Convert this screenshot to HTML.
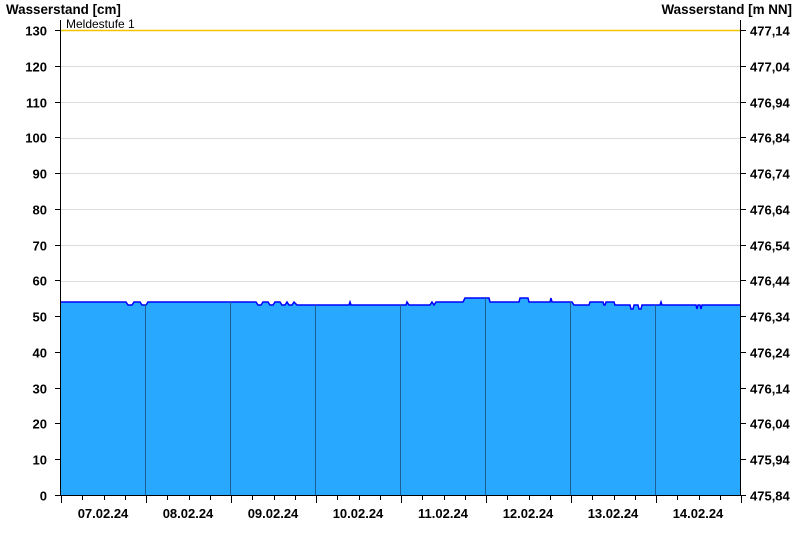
<!DOCTYPE html>
<html><head><meta charset="utf-8"><style>
body{margin:0;background:#fff;width:800px;height:550px;overflow:hidden}
text{font-family:"Liberation Sans",Arial,sans-serif;font-size:13px;font-weight:bold;fill:#000}
</style></head><body>
<svg width="800" height="550" xmlns="http://www.w3.org/2000/svg">
<text x="6" y="14" style="font-size:13.4px">Wasserstand [cm]</text>
<text x="792" y="14" text-anchor="end" style="font-size:13.4px">Wasserstand [m NN]</text>
<g stroke="#dcdcdc" stroke-width="1">
<line x1="61" x2="740" y1="66.5" y2="66.5"/><line x1="61" x2="740" y1="102.5" y2="102.5"/>
<line x1="61" x2="740" y1="138.5" y2="138.5"/><line x1="61" x2="740" y1="173.5" y2="173.5"/>
<line x1="61" x2="740" y1="209.5" y2="209.5"/><line x1="61" x2="740" y1="245.5" y2="245.5"/>
<line x1="61" x2="740" y1="281.5" y2="281.5"/><line x1="61" x2="740" y1="316.5" y2="316.5"/>
</g>
<line x1="61" x2="740" y1="30.5" y2="30.5" stroke="#f5c400" stroke-width="1.5"/>
<text x="66" y="28" style="font-weight:normal;font-size:12px">Meldestufe 1</text>
<polygon fill="#29a8ff" stroke="none" points="61,495 61,302 126,302 128,305 132,305 134,302 140,302 142,305 146,305 148,302 256,302 258,305 261,305 263,302 268,302 270,305 273,305 275,302 280,302 282,305 285,305 287,302 289,305 292,305 294,302 297,305 349,305 350,302 351,305 406,305 407,302 409,305 430,305 432,302 434,305 436,302 463,302 465,298 489,298 490,302 519,302 520,298 528,298 529,302 550,302 551,298 552,302 572,302 574,305 589,305 590,302 603,302 604,305 605,305 606,302 614,302 615,305 630,305 631,309 633,309 634,305 638,305 639,309 641,309 642,305 660,305 661,302 662,305 696,305 697,309 698,305 700,305 701,309 702,305 740,305 740,495"/>
<polyline fill="none" stroke="#0000ff" stroke-width="1.5" points="61,302 126,302 128,305 132,305 134,302 140,302 142,305 146,305 148,302 256,302 258,305 261,305 263,302 268,302 270,305 273,305 275,302 280,302 282,305 285,305 287,302 289,305 292,305 294,302 297,305 349,305 350,302 351,305 406,305 407,302 409,305 430,305 432,302 434,305 436,302 463,302 465,298 489,298 490,302 519,302 520,298 528,298 529,302 550,302 551,298 552,302 572,302 574,305 589,305 590,302 603,302 604,305 605,305 606,302 614,302 615,305 630,305 631,309 633,309 634,305 638,305 639,309 641,309 642,305 660,305 661,302 662,305 696,305 697,309 698,305 700,305 701,309 702,305 740,305"/>
<g stroke="#1d5f96" stroke-width="1">
<line x1="145.5" x2="145.5" y1="304" y2="495"/><line x1="230.5" x2="230.5" y1="302" y2="495"/>
<line x1="315.5" x2="315.5" y1="305" y2="495"/><line x1="400.5" x2="400.5" y1="305" y2="495"/>
<line x1="485.5" x2="485.5" y1="298" y2="495"/><line x1="570.5" x2="570.5" y1="302" y2="495"/>
<line x1="655.5" x2="655.5" y1="305" y2="495"/>
</g>
<g stroke="#000" stroke-width="1">
<line x1="60.5" x2="60.5" y1="20" y2="496"/><line x1="740.5" x2="740.5" y1="20" y2="496"/>
<line x1="60" x2="741" y1="495.5" y2="495.5"/>
</g>
<g stroke="#000" stroke-width="1" id="ticks"></g>
<g id="lab"></g>
<script>
var t=document.getElementById('ticks'),l=document.getElementById('lab'),ns='http://www.w3.org/2000/svg';
function ln(a,b,c,d){var e=document.createElementNS(ns,'line');e.setAttribute('x1',a);e.setAttribute('x2',b);e.setAttribute('y1',c);e.setAttribute('y2',d);t.appendChild(e);}
function tx(x,y,s,a){var e=document.createElementNS(ns,'text');e.setAttribute('x',x);e.setAttribute('y',y);if(a)e.setAttribute('text-anchor',a);e.textContent=s;l.appendChild(e);}
for(var i=0;i<=13;i++){var y=Math.round(495-i*35.77)+0.5;ln(55,60,y,y);ln(741,746,y,y);
tx(47,y+5,String(i*10),'end');tx(750,y+5,(475.84+i*0.1).toFixed(2).replace('.',','));}
for(var k=0;k<=32;k++){var x=Math.round(61+k*21.25)+0.5;ln(x,x,495,(k%4==0)?503:500);}
var d=['07','08','09','10','11','12','13','14'];
for(var j=0;j<8;j++)tx(103+j*85,518,d[j]+'.02.24','middle');
</script>
</svg>
</body></html>
